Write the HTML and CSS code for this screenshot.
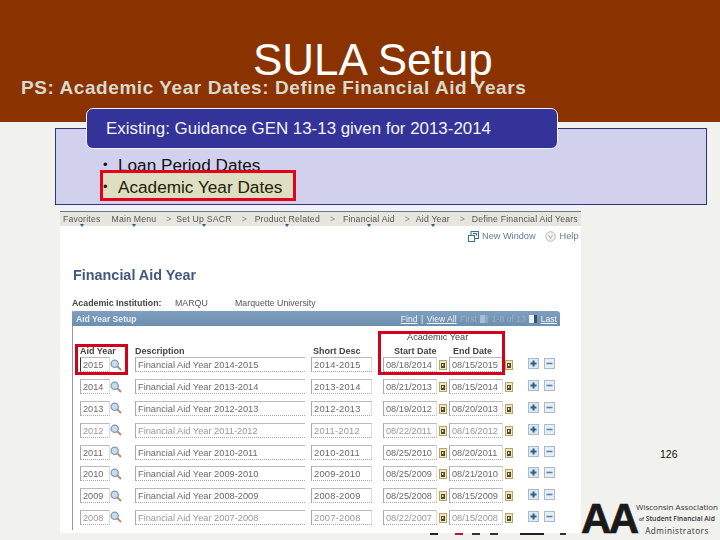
FILE: index.html
```html
<!DOCTYPE html>
<html lang="en">
<head>
<meta charset="utf-8">
<title>SULA Setup</title>
<link rel="stylesheet" href="styles.css">
</head>
<body>
<svg class="defs" width="0" height="0" aria-hidden="true">
  <defs>
    <symbol id="mag" viewBox="0 0 12 12">
      <circle cx="4.7" cy="4.7" r="3.6" fill="#c9dcec" stroke="#7e9cb8" stroke-width="1.3"/>
      <path d="M7.4 7.4 11 11" stroke="#b58a70" stroke-width="2"/>
    </symbol>
    <symbol id="cal" viewBox="0 0 8 11">
      <rect x="0.5" y="1.5" width="7" height="9" fill="#f3e6b8" stroke="#b9a468"/>
      <rect x="2" y="4" width="4" height="5" fill="#4a4a3a"/>
      <rect x="3" y="5" width="1.4" height="2" fill="#f3e6b8"/>
    </symbol>
    <symbol id="plus" viewBox="0 0 11 11">
      <rect x="0.5" y="0.5" width="10" height="10" fill="#dce8f2" stroke="#a9bccd"/>
      <path d="M5.5 2.5v6M2.5 5.5h6" stroke="#2f5f86" stroke-width="2"/>
    </symbol>
    <symbol id="minus" viewBox="0 0 11 11">
      <rect x="0.5" y="0.5" width="10" height="10" fill="#e6eef5" stroke="#a9bccd"/>
      <path d="M2.5 5.5h6" stroke="#5f84a3" stroke-width="1.6"/>
    </symbol>
  </defs>
</svg>

<div class="slide">
  <header class="band">
    <h1 class="title">SULA Setup</h1>
    <h2 class="subtitle">PS: Academic Year Dates: Define Financial Aid Years</h2>
  </header>

  <section class="box">
    <ul class="bullets">
      <li>Loan Period Dates</li>
      <li class="hilite">Academic Year Dates</li>
    </ul>
  </section>
  <div class="callout">Existing: Guidance GEN 13-13 given for 2013-2014</div>

  <div class="pagenum">126</div>

  <div class="logo">
    <div class="logo-mark">AA</div>
    <div class="logo-text">
      <span class="l1">Wisconsin Association</span>
      <span class="l2"><small>of</small> Student Financial Aid</span>
      <span class="l3">Administrators</span>
    </div>
  </div>
  <svg class="frags" viewBox="0 0 150 3" aria-hidden="true">
    <rect x="0" y="0" width="8" height="2" fill="#222"/>
    <rect x="25" y="0" width="8" height="2" fill="#c8102e"/>
    <rect x="42" y="0" width="8" height="2" fill="#333"/>
    <rect x="60" y="0" width="8" height="2" fill="#333"/>
    <rect x="90" y="0" width="24" height="2" fill="#222"/>
    <rect x="130" y="0" width="6" height="2" fill="#333"/>
  </svg>

  <main class="panel">
    <div class="tint"></div>
    <nav class="crumbs">
      <span class="c1 dd">Favorites</span>
      <span class="c2 dd">Main Menu</span><i>&gt;</i>
      <span class="c3 dd">Set Up SACR</span><i>&gt;</i>
      <span class="c4 dd">Product Related</span><i>&gt;</i>
      <span class="c5 dd">Financial Aid</span><i>&gt;</i>
      <span class="c6 dd">Aid Year</span><i>&gt;</i>
      <span class="c7">Define Financial Aid Years</span>
    </nav>
    <div class="tools">
      <svg class="ico-win" viewBox="0 0 11 11"><rect x="3" y="0.5" width="7.5" height="7" fill="#eef4f8" stroke="#3f6f8f"/><rect x="0.5" y="4.5" width="6" height="6" fill="#fff" stroke="#3f6f8f"/><path d="M5 2.5h3.5v2" fill="none" stroke="#3f6f8f"/></svg>
      <span class="t-new">New Window</span>
      <svg class="ico-help" viewBox="0 0 11 11"><circle cx="5.5" cy="5.5" r="4.8" fill="#f2f3ee" stroke="#b7bdb0"/><path d="M3.5 4 5.5 7.5 7.5 4" fill="none" stroke="#a9b1a0"/></svg>
      <span class="t-help">Help</span>
    </div>
    <h3 class="page-title">Financial Aid Year</h3>
    <div class="inst">
      <b>Academic Institution:</b><span class="inst-code">MARQU</span><span>Marquette University</span>
    </div>

    <div class="grid-wrap">
      <div class="gridbar">
        <b>Aid Year Setup</b>
        <div class="pager">
          <u>Find</u><span>|</span><u>View All</u>
          <span class="dim">First</span><em class="sq dimsq"></em><span class="dim">1-8 of 13</span><em class="sq"></em><u>Last</u>
        </div>
      </div>
      <div class="group">Academic Year</div>
      <div class="grid">
        <b class="h">Aid Year</b><span></span><b class="h">Description</b><b class="h hd">Short Desc</b><b class="h hs">Start Date</b><span></span><b class="h he">End Date</b><span></span><span></span><span></span>

        <span class="in yr caret">2015</span><svg class="mag"><use href="#mag"/></svg><span class="in desc">Financial Aid Year 2014-2015</span><span class="in sd">2014-2015</span><span class="in dt">08/18/2014</span><svg class="cal"><use href="#cal"/></svg><span class="in dt">08/15/2015</span><svg class="cal"><use href="#cal"/></svg><svg class="btn"><use href="#plus"/></svg><svg class="btn"><use href="#minus"/></svg>

        <span class="in yr">2014</span><svg class="mag"><use href="#mag"/></svg><span class="in desc">Financial Aid Year 2013-2014</span><span class="in sd">2013-2014</span><span class="in dt">08/21/2013</span><svg class="cal"><use href="#cal"/></svg><span class="in dt">08/15/2014</span><svg class="cal"><use href="#cal"/></svg><svg class="btn"><use href="#plus"/></svg><svg class="btn"><use href="#minus"/></svg>

        <span class="in yr">2013</span><svg class="mag"><use href="#mag"/></svg><span class="in desc">Financial Aid Year 2012-2013</span><span class="in sd">2012-2013</span><span class="in dt">08/19/2012</span><svg class="cal"><use href="#cal"/></svg><span class="in dt">08/20/2013</span><svg class="cal"><use href="#cal"/></svg><svg class="btn"><use href="#plus"/></svg><svg class="btn"><use href="#minus"/></svg>

        <span class="in yr faint">2012</span><svg class="mag"><use href="#mag"/></svg><span class="in desc faint">Financial Aid Year 2011-2012</span><span class="in sd faint">2011-2012</span><span class="in dt faint">08/22/2011</span><svg class="cal"><use href="#cal"/></svg><span class="in dt faint">08/16/2012</span><svg class="cal"><use href="#cal"/></svg><svg class="btn"><use href="#plus"/></svg><svg class="btn"><use href="#minus"/></svg>

        <span class="in yr">2011</span><svg class="mag"><use href="#mag"/></svg><span class="in desc">Financial Aid Year 2010-2011</span><span class="in sd">2010-2011</span><span class="in dt">08/25/2010</span><svg class="cal"><use href="#cal"/></svg><span class="in dt">08/20/2011</span><svg class="cal"><use href="#cal"/></svg><svg class="btn"><use href="#plus"/></svg><svg class="btn"><use href="#minus"/></svg>

        <span class="in yr">2010</span><svg class="mag"><use href="#mag"/></svg><span class="in desc">Financial Aid Year 2009-2010</span><span class="in sd">2009-2010</span><span class="in dt">08/25/2009</span><svg class="cal"><use href="#cal"/></svg><span class="in dt">08/21/2010</span><svg class="cal"><use href="#cal"/></svg><svg class="btn"><use href="#plus"/></svg><svg class="btn"><use href="#minus"/></svg>

        <span class="in yr">2009</span><svg class="mag"><use href="#mag"/></svg><span class="in desc">Financial Aid Year 2008-2009</span><span class="in sd">2008-2009</span><span class="in dt">08/25/2008</span><svg class="cal"><use href="#cal"/></svg><span class="in dt">08/15/2009</span><svg class="cal"><use href="#cal"/></svg><svg class="btn"><use href="#plus"/></svg><svg class="btn"><use href="#minus"/></svg>

        <span class="in yr faint">2008</span><svg class="mag"><use href="#mag"/></svg><span class="in desc faint">Financial Aid Year 2007-2008</span><span class="in sd faint">2007-2008</span><span class="in dt faint">08/22/2007</span><svg class="cal"><use href="#cal"/></svg><span class="in dt faint">08/15/2008</span><svg class="cal"><use href="#cal"/></svg><svg class="btn"><use href="#plus"/></svg><svg class="btn"><use href="#minus"/></svg>
      </div>
    </div>
  </main>

  <div class="redbox redbox-year"></div>
  <div class="redbox redbox-dates"></div>
</div>
</body>
</html>
```

FILE: styles.css
```css
* { box-sizing: border-box; }
html, body { margin: 0; padding: 0; }
body { font-family: "Liberation Sans", Arial, sans-serif; background: #f1f1ed; }
.defs { position: absolute; }

.slide { position: relative; width: 720px; height: 540px; overflow: hidden; background: #f1f1ed; }

/* header */
.band { height: 122px; background: #8a3200; padding-top: 37px; }
.title { margin: 0 0 0 253px; font-size: 44px; font-weight: 400; line-height: 46px; color: #fff; white-space: nowrap; }
.subtitle { margin: -6px 0 0 21px; font-size: 19px; font-weight: 700; line-height: 22px; letter-spacing: .57px; color: #d9d9cd; white-space: nowrap; }

/* lavender box + callout */
.box { position: absolute; left: 55px; top: 128px; width: 652px; height: 77px; background: #d1d1ed; border: 1px solid #34347e; padding-top: 25px; }
.bullets { list-style: none; margin: 0; padding: 0 0 0 44px; font-size: 17.2px; line-height: 22px; color: #111; }
.bullets li { position: relative; padding-left: 18px; width: 196px; white-space: nowrap; }
.bullets li::before { content: "\2022"; position: absolute; left: 3px; font-size: 13px; }
.bullets .hilite { margin-top: -6px; height: 31px; border: 3px solid #e2001a; background: #dedec3; color: #222200; padding: 3px 0 0 15px; }
.bullets .hilite::before { left: 0; }
.callout { position: absolute; left: 86px; top: 108px; width: 472px; height: 41px; padding-left: 19px; background: #333399; border: 1px solid #f1f1ed; border-radius: 7px; color: #f4f4f4; font-size: 16.9px; line-height: 39px; white-space: nowrap; }

.redbox { position: absolute; border: 3px solid #d2001c; }
.redbox-year { left: 75px; top: 344px; width: 53px; height: 31px; }
.redbox-dates { left: 378px; top: 331px; width: 127px; height: 44px; }

.pagenum { position: absolute; left: 660px; top: 448px; font-size: 10.5px; line-height: 12px; color: #111; }

/* logo */
.logo { position: absolute; left: 581px; top: 500px; display: flex; align-items: flex-start; }
.logo-mark { width: 55px; font-size: 42px; font-weight: 700; line-height: 38px; letter-spacing: -2.5px; color: #1a1a1a; white-space: nowrap; -webkit-text-stroke: .7px #1a1a1a; }
.logo-text { display: flex; flex-direction: column; align-items: center; width: 82px; color: #333; font-family: "Open Sans", sans-serif; white-space: nowrap; }
.logo-text span { display: block; line-height: 12px; }
.logo-text .l1 { font-size: 8px; line-height: 13px; }
.logo-text .l2 { font-size: 6.8px; font-weight: 600; }
.logo-text .l3 { font-size: 8.2px; letter-spacing: .5px; }
.logo-text small { font-size: 5px; }
.frags { position: absolute; left: 430px; top: 533px; width: 150px; height: 3px; }

/* screenshot panel */
.panel { position: absolute; left: 60px; top: 205px; width: 521px; height: 328px; background: #fff; color: #666; font-size: 8.8px; filter: blur(.4px); }
.tint { height: 6px; background: #eff1fb; }
.crumbs { height: 15px; background: #e6e6de; border-top: 1px solid #777; display: flex; align-items: center; padding: 0 0 1px 3px; white-space: nowrap; color: #555; font-size: 8.7px; letter-spacing: .2px; }
.crumbs i { font-style: normal; color: #888; width: 0; transform: translateX(10px); }
.crumbs span { display: block; position: relative; }
.crumbs .c2 { margin-left: 11px; }
.crumbs .c3 { margin-left: 20px; }
.crumbs .c4 { margin-left: 23px; }
.crumbs .c5 { margin-left: 23px; }
.crumbs .c6 { margin-left: 21px; }
.crumbs .c7 { margin-left: 22px; }
.crumbs .dd::after { content: ""; position: absolute; left: 50%; bottom: -3px; margin-left: -2px; border: 2px solid transparent; border-top: 3px solid #2f5f7f; border-bottom: 0; }

.tools { display: flex; align-items: center; height: 14px; margin-top: 3px; padding-left: 408px; color: #607d96; font-size: 9.2px; white-space: nowrap; }
.ico-win { width: 11px; height: 11px; flex: none; }
.t-new { margin-left: 3px; }
.ico-help { width: 11px; height: 11px; flex: none; margin-left: 9px; }
.t-help { margin-left: 4px; }

.page-title { margin: 24px 0 0 13px; font-size: 14.4px; line-height: 16px; font-weight: 700; color: #41597d; }
.inst { display: flex; margin: 15px 0 0 12px; font-size: 8.8px; line-height: 11px; color: #555; white-space: nowrap; }
.inst b { width: 103px; font-weight: 700; color: #444; }
.inst-code { width: 60px; }

.grid-wrap { margin: 2px 0 0 12px; border-left: 1px solid #999; height: 219px; width: 488px; }
.gridbar { height: 15px; background: linear-gradient(#7f9fbd, #6c8fb0); display: flex; align-items: center; justify-content: space-between; padding: 0 3px 0 4px; color: #e8eef4; font-size: 8.6px; border-radius: 3px 3px 0 0; margin-left: -1px; }
.pager { display: flex; align-items: center; gap: 3.5px; font-size: 8.6px; }
.pager u { color: #f2f6fa; }
.pager .dim { color: #98b0c6; }
.sq { display: block; width: 8px; height: 8px; background: #e9eef3; border-right: 3px solid #30506c; }
.dimsq { background: #a9bfd2; border-right-color: #8ea7bd; }

.group { height: 13px; padding-left: 334px; margin-top: 5px; font-size: 9.2px; line-height: 13px; color: #444; white-space: nowrap; }
.grid { display: grid; grid-template-columns: 30px 25px 176px 72px 54px 12px 54px 25px 16px 11px; grid-template-rows: 10px repeat(8, 21.8px); padding-left: 7px; align-items: center; }
.h { font-size: 9px; line-height: 10px; color: #444; white-space: nowrap; transform: translateY(2px); }
.hd { padding-left: 2px; }
.hs { padding-left: 11px; }
.he { padding-left: 4px; }
.in { display: block; height: 15px; line-height: 14px; padding-left: 2px; color: #6a6a6a; white-space: nowrap; overflow: hidden; border-top: 1px solid #bbb; border-left: 1px solid #aaa; border-right: 1px solid #ddd; border-bottom: 1px dotted #aaa; }
.yr { width: 30px; font-size: 9.2px; }
.desc { width: 170px; font-size: 9.26px; border-right: 0; }
.sd { width: 61px; font-size: 9.4px; letter-spacing: .2px; }
.dt { width: 54px; font-size: 9.2px; }
.faint { color: #999; }
.caret { border-left: 1px solid #333; }
.mag { width: 12px; height: 12px; }
.cal { width: 8px; height: 11px; margin-left: 1.5px; }
.btn { width: 11px; height: 11px; transform: translateY(-1px); }
```
